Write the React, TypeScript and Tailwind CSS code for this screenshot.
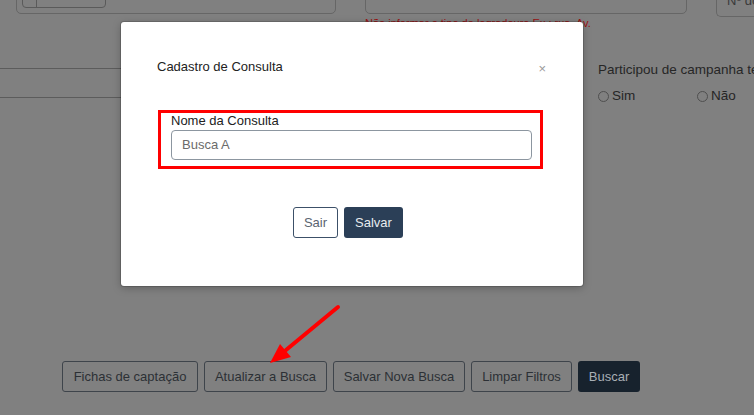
import React from 'react';

const acoes = [
  { label: 'Fichas de captação', w: 'w-[136px]' },
  { label: 'Atualizar a Busca', w: 'w-[123px]' },
  { label: 'Salvar Nova Busca', w: 'w-[132px]' },
  { label: 'Limpar Filtros', w: 'w-[101px]' },
];

const App = () => {
  return (
    <div className="relative h-[415px] w-[754px] overflow-hidden bg-[#808080] font-['Liberation_Sans',Arial,sans-serif]">
      {/* Page behind the backdrop (already dimmed) */}
      <div className="flex h-full flex-col">
        {/* Top row of filters, cut off by the scroll */}
        <div className="flex items-start">
          <div className="-mt-[10px] ml-[16px] flex h-[24px] w-[320px] shrink-0 items-end rounded-[5px] border border-[#666] pb-[5px] pl-[5px]">
            <div className="flex h-[14px] w-[84px] overflow-hidden rounded-[4px] border border-[#5a5a5a]">
              <div className="w-[14px] border-r border-[#5a5a5a]" />
              <span className="-mt-[6px] pl-[6px] text-[11px] leading-[14px] text-[#333]">Transferir</span>
            </div>
          </div>
          <div className="ml-[29px] w-[322px] shrink-0">
            <div className="-mt-[10px] h-[24px] rounded-[5px] border border-[#666]" />
            <p className="mt-[3px] whitespace-nowrap text-[11px] leading-[12px] text-[#9b1111]">
              Não informar o tipo de logradouro Ex.: rua, Av.
            </p>
          </div>
          <div className="-mt-[10px] ml-[29px] h-[27px] flex-1 whitespace-nowrap rounded-l-[5px] border border-r-0 border-[#666] pl-[10px] pt-[3px] text-[13px] leading-[14px] text-[#3a3a3a]">
            Nº do
          </div>
        </div>

        {/* Second row */}
        <div className="mt-[32px] flex items-start">
          <div className="mt-[7px] h-[30px] w-[360px] border-y border-[#5c5c5c]" />
          <div className="ml-auto w-[156px] whitespace-nowrap pt-[1px] text-[13.5px] leading-[16px] text-[#262626]">
            <p>Participou de campanha telemarketing?</p>
            <div className="mt-[10px] flex items-center">
              <span className="flex w-[99px] items-center">
                <span className="mr-[3px] h-[11px] w-[11px] rounded-full border border-[#4f4f4f]" />
                Sim
              </span>
              <span className="flex items-center">
                <span className="mr-[3px] h-[11px] w-[11px] rounded-full border border-[#4f4f4f]" />
                Não
              </span>
            </div>
          </div>
        </div>

        {/* Bottom actions */}
        <div className="mt-auto flex gap-[6px] pb-[23px] pl-[62px]">
          {acoes.map((a) => (
            <button
              key={a.label}
              className={`${a.w} h-[31px] rounded-[3px] border border-[#3e444b] text-[13px] text-[#2c3035]`}
            >
              {a.label}
            </button>
          ))}
          <button className="h-[31px] w-[62px] rounded-[3px] bg-[#17222d] text-[13px] text-[#a9afb5]">
            Buscar
          </button>
        </div>
      </div>

      {/* Modal */}
      <div className="absolute left-[121px] top-[22px] h-[264px] w-[462px] rounded-[3px] bg-white shadow-[0_0_0_1px_rgba(0,0,0,0.15),0_2px_8px_rgba(0,0,0,0.25)]">
        <div className="flex items-center justify-between pl-[36px] pr-[37px] pt-[35px]">
          <h2 className="text-[13px] leading-[16px] text-[#222]">Cadastro de Consulta</h2>
          <span className="mt-[4px] text-[13px] leading-[16px] text-[#9a9a9a]">×</span>
        </div>

        <div className="ml-[37px] mt-[33px] w-[385px] border-[3px] border-[#ff0000] pb-[6px] pl-[10px] pr-[8px]">
          <label className="block text-[13px] leading-[16px] text-[#222]">Nome da Consulta</label>
          <div className="mt-[1px] flex h-[30px] items-center rounded-[4px] border border-[#8c96a0] pl-[10px] text-[13px] text-[#6b6b6b]">
            Busca A
          </div>
        </div>

        <div className="ml-[37px] mt-[38px] flex w-[385px] justify-center gap-[6px] pr-[5px]">
          <button className="h-[31px] w-[45px] rounded-[3px] border border-[#3c5068] text-[13px] text-[#5a6470]">
            Sair
          </button>
          <button className="h-[31px] w-[59px] rounded-[3px] bg-[#2b3f57] text-[13px] text-[#e8ecef]">
            Salvar
          </button>
        </div>
      </div>

      {/* Red annotation arrow */}
      <svg className="pointer-events-none absolute inset-0" width="754" height="415" viewBox="0 0 754 415">
        <line x1="338" y1="307" x2="286" y2="350" stroke="#ff0000" strokeWidth="4" strokeLinecap="round" />
        <polygon points="270,363 291,357 280,344" fill="#ff0000" />
      </svg>
    </div>
  );
};

export default App;
